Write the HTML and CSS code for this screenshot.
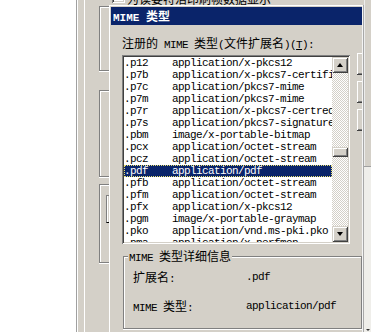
FILE: index.html
```html
<!DOCTYPE html>
<html lang="zh-CN">
<head>
<meta charset="utf-8">
<title>MIME 类型</title>
<link rel="stylesheet" href="styles.css">
</head>
<body>
<div class="screen">
  <div class="desk"></div>
  <div class="bgwin">
    <div class="bgwin-in">
      <div class="bgpane">
        <div class="bgtop"><span class="chk"></span><span class="bgtext">为读要特活印刷帧数据显示</span></div>
        <div class="bracket b1"></div>
        <div class="bracket b2"></div>
        <div class="bracket b3"><div class="stub"></div></div>
      </div>
    </div>
    <div class="rside">
      <div class="rside-top"></div>
      <div class="rside-bottom"><i class="tiny-arrow"></i></div>
    </div>
  </div>

  <div class="dialog">
    <div class="titlebar"><span class="mt">MIME </span>类型</div>
    <div class="dbody">
      <div class="label">注册的<span class="m"> MIME </span>类型<span class="m">(</span>文件扩展名<span class="m">)(<u>T</u>):</span></div>
      <div class="listrow">
        <div class="listbox">
          <div class="rows">
            <div class="row"><span class="ext">.p12</span><span>application/x-pkcs12</span></div>
            <div class="row"><span class="ext">.p7b</span><span>application/x-pkcs7-certificates</span></div>
            <div class="row"><span class="ext">.p7c</span><span>application/pkcs7-mime</span></div>
            <div class="row"><span class="ext">.p7m</span><span>application/pkcs7-mime</span></div>
            <div class="row"><span class="ext">.p7r</span><span>application/x-pkcs7-certreqresp</span></div>
            <div class="row"><span class="ext">.p7s</span><span>application/pkcs7-signature</span></div>
            <div class="row"><span class="ext">.pbm</span><span>image/x-portable-bitmap</span></div>
            <div class="row"><span class="ext">.pcx</span><span>application/octet-stream</span></div>
            <div class="row"><span class="ext">.pcz</span><span>application/octet-stream</span></div>
            <div class="row sel"><span class="ext">.pdf</span><span>application/pdf</span></div>
            <div class="row"><span class="ext">.pfb</span><span>application/octet-stream</span></div>
            <div class="row"><span class="ext">.pfm</span><span>application/octet-stream</span></div>
            <div class="row"><span class="ext">.pfx</span><span>application/x-pkcs12</span></div>
            <div class="row"><span class="ext">.pgm</span><span>image/x-portable-graymap</span></div>
            <div class="row"><span class="ext">.pko</span><span>application/vnd.ms-pki.pko</span></div>
            <div class="row"><span class="ext">.pma</span><span>application/x-perfmon</span></div>
          </div>
          <div class="vscroll">
            <div class="sbtn"><i class="arrow-up"></i></div>
            <div class="track"><div class="thumb"></div></div>
            <div class="sbtn"><i class="arrow-down"></i></div>
          </div>
        </div>
        <div class="btncol">
          <div class="pbtn"></div>
          <div class="pbtn"></div>
          <div class="pbtn"></div>
        </div>
      </div>
      <div class="group">
        <div class="legend"><span class="m">MIME </span>类型详细信息</div>
        <div class="details">
          <span>扩展名<span class="m">:</span></span><span class="m">.pdf</span>
          <span><span class="m">MIME </span>类型<span class="m">:</span></span><span class="m">application/pdf</span>
        </div>
      </div>
    </div>
  </div>
</div>
</body>
</html>
```

FILE: styles.css
```css
* { box-sizing: border-box; margin: 0; padding: 0; }
html, body { width: 371px; height: 332px; overflow: hidden; background: #fff; }
body {
  font-family: "Noto Sans CJK SC", sans-serif;
  font-size: 12px;
  line-height: 12px;
  color: #000;
}
.m {
  font-family: "Liberation Mono", monospace;
  font-size: 11px;
  letter-spacing: -0.6px;
}
.mt {
  font-family: "Liberation Mono", monospace;
  font-size: 11px;
  font-weight: bold;
}

.screen { position: relative; display: flex; width: 371px; height: 332px; overflow: hidden; }
.desk { width: 76px; flex: none; background: #fff; }

/* background window */
.bgwin { flex: 1; display: flex; background: #d4d0c8; border-left: 1px solid #a0a0a0; }
.bgwin-in { flex: 1; display: flex; border-left: 1px solid #fff; padding-left: 6px; }
.bgpane { flex: 1; display: flex; flex-direction: column; border-left: 1px solid #fff; padding-left: 14px; }
.bgtop { height: 12px; margin-top: -7px; display: flex; align-items: flex-start; padding-left: 13px; gap: 2px; white-space: nowrap; }
.chk { width: 13px; height: 10px; flex: none; background: #fff; box-shadow: inset 1px 1px #808080, inset -1px -1px #fff, inset 2px 2px #404040, inset -2px -2px #d4d0c8; }
.bgtext { font-size: 12px; line-height: 12px; }
.bracket {
  width: 20px;
  border: 1px solid #808080;
  border-right: 0;
  box-shadow: inset 1px 1px #fff, 0 1px 0 #fff;
}
.b1 { margin-top: 1px; height: 65px; }
.b2 { margin-top: 19px; height: 87px; }
.b3 { margin-top: 7px; height: 79px; padding: 10px 0 0 6px; }
.stub { width: 4px; height: 28px; border-left: 1px solid #808080; border-top: 1px solid #808080; border-bottom: 1px solid #000; box-shadow: inset 1px 0 #fff; }

.rside { width: 7px; flex: none; display: flex; flex-direction: column; }
.rside-top { height: 167px; background: #d4d0c8; box-shadow: inset 1px 0 #ececec; border-bottom: 1px solid #a0a0a0; }
.rside-bottom { flex: 1; background: #efeeea; display: flex; flex-direction: column; justify-content: flex-end; align-items: flex-end; padding: 0 1px 1px 0; }
.tiny-arrow { width: 1px; height: 0; border-left: 2px solid transparent; border-right: 2px solid transparent; border-top: 2px solid #333; }

/* dialog */
.dialog {
  position: absolute;
  left: 109px;
  top: 5px;
  width: 254px;
  height: 327px;
  background: #d4d0c8;
  border-left: 1px solid #fff;
  border-top: 1px solid #fff;
  border-right: 1px solid #f4f4f4;
  padding: 1px 0 0 1px;
  box-shadow: 1px 0 0 #a8a8a8;
  overflow: hidden;
}
.titlebar {
  height: 18px;
  background: #0a246a;
  color: #fff;
  font-weight: bold;
  padding: 3px 0 0 2px;
  line-height: 12px;
  white-space: nowrap;
}
.dbody { padding: 12px 0 0 11px; }
.label { height: 12px; white-space: nowrap; }
.listrow { display: flex; gap: 7px; margin-top: 6px; }
.listbox {
  width: 228px;
  height: 189px;
  flex: none;
  display: flex;
  padding: 2px;
  background: #fff;
  box-shadow: inset 1px 1px #808080, inset -1px -1px #fff, inset 2px 2px #404040, inset -2px -2px #d4d0c8;
}
.rows { flex: 1; overflow: hidden; }
.row {
  position: relative;
  height: 12px;
  line-height: 12px;
  display: flex;
  white-space: nowrap;
  font-family: "Liberation Mono", monospace;
  font-size: 11px;
  letter-spacing: -0.6px;
}
.ext { width: 48px; flex: none; }
.row.sel { background: #0a246a; color: #fff; }
.row.sel::after { content: ""; position: absolute; inset: 0; border: 1px dotted #e8e070; }

.vscroll { width: 16px; flex: none; display: flex; flex-direction: column; }
.sbtn, .thumb {
  background: #d4d0c8;
  box-shadow: inset 1px 1px #d4d0c8, inset -1px -1px #404040, inset 2px 2px #fff, inset -2px -2px #808080;
}
.sbtn { height: 16px; flex: none; display: flex; align-items: center; justify-content: center; }
.arrow-up, .arrow-down { width: 1px; height: 0; border-left: 3px solid transparent; border-right: 3px solid transparent; }
.arrow-up { border-bottom: 4px solid #000; margin-top: -1px; }
.arrow-down { border-top: 4px solid #000; }
.track {
  flex: 1;
  background: repeating-conic-gradient(#d4d0c8 0 25%, #fff 0 50%) 0 0 / 2px 2px;
}
.thumb { height: 10px; margin-top: 74px; }

.btncol { display: flex; flex-direction: column; gap: 6px; margin-top: -2px; }
.pbtn {
  width: 75px;
  height: 22px;
  background: #d4d0c8;
  box-shadow: inset -1px -1px #404040, inset 1px 1px #fff, inset -2px -2px #808080;
}

.group {
  width: 239px;
  height: 73px;
  margin: 12px 0 0 1px;
  border: 1px solid #808080;
  box-shadow: inset 1px 1px #fff, 0 1px 0 #fff;
}
.legend {
  width: fit-content;
  margin: -7px 0 0 4px;
  padding: 0 1px;
  background: #d4d0c8;
  white-space: nowrap;
}
.details {
  display: grid;
  grid-template-columns: 113px auto;
  row-gap: 15px;
  padding: 7px 0 0 9px;
  white-space: nowrap;
}
```
